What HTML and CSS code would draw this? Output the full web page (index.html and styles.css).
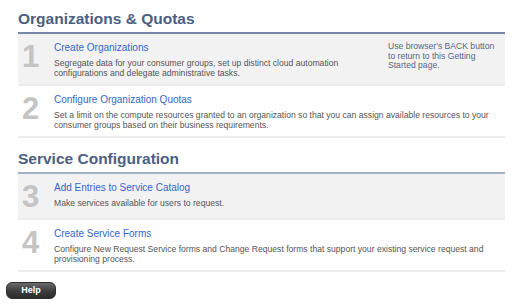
FILE: index.html
```html
<!DOCTYPE html>
<html>
<head>
<meta charset="utf-8">
<link rel="stylesheet" href="styles.css">
</head>
<body>
<div class="page">
  <section class="section">
    <h2 class="heading">Organizations &amp; Quotas</h2>
    <div class="list">
      <div class="step shaded">
        <div class="num">1</div>
        <div class="body">
          <a class="title">Create Organizations</a>
          <p class="desc">Segregate data for your consumer groups, set up distinct cloud automation configurations and delegate administrative tasks.</p>
        </div>
        <div class="note">Use browser's BACK button to return to this Getting Started page.</div>
      </div>
      <div class="step">
        <div class="num">2</div>
        <div class="body wide">
          <a class="title">Configure Organization Quotas</a>
          <p class="desc">Set a limit on the compute resources granted to an organization so that you can assign available resources to your consumer groups based on their business requirements.</p>
        </div>
      </div>
    </div>
  </section>
  <section class="section second">
    <h2 class="heading">Service Configuration</h2>
    <div class="list light">
      <div class="step shaded">
        <div class="num">3</div>
        <div class="body wide">
          <a class="title">Add Entries to Service Catalog</a>
          <p class="desc">Make services available for users to request.</p>
        </div>
      </div>
      <div class="step">
        <div class="num">4</div>
        <div class="body wide">
          <a class="title">Create Service Forms</a>
          <p class="desc">Configure New Request Service forms and Change Request forms that support your existing service request and provisioning process.</p>
        </div>
      </div>
    </div>
  </section>
</div>
<div class="footer">
  <button class="help">Help</button>
</div>
</body>
</html>
```
FILE: styles.css
```css
html, body {
  margin: 0;
  padding: 0;
  background: #ffffff;
  font-family: "Liberation Sans", Arial, Helvetica, sans-serif;
}

.page {
  padding: 9px 15px 0 18px;
}

.heading {
  margin: 0;
  font-size: 15.5px;
  font-weight: bold;
  color: #4b6081;
  line-height: 20px;
  padding-bottom: 3px;
  border-bottom: 2px solid #7588a8;
}

.second {
  margin-top: 11px;
}

.second .heading {
  border-bottom-color: #a3b1c7;
}

.step {
  display: flex;
  border-bottom: 2px solid #ececec;
  padding: 8px 0 6px 0;
}

.step.shaded {
  background: #f2f2f2;
}

.num {
  width: 36px;
  flex: none;
  padding-left: 4px;
  box-sizing: border-box;
  font-size: 31px;
  font-weight: bold;
  color: #c4c4c4;
  line-height: 30px;
}

.body {
  width: 305px;
  flex: none;
}

.body.wide {
  width: 440px;
}

.title {
  display: block;
  font-size: 10px;
  line-height: 12px;
  color: #3566c9;
  cursor: pointer;
}

.desc {
  margin: 4px 0 0 0;
  font-size: 8.6px;
  line-height: 10px;
  color: #555555;
}

.note {
  margin-left: 29px;
  margin-top: 0;
  width: 112px;
  font-size: 8.6px;
  line-height: 9.5px;
  color: #54678b;
}

.footer {
  padding: 10px 0 0 6px;
}

.help {
  display: block;
  width: 50px;
  height: 17px;
  border: 1px solid #2e2e2e;
  border-radius: 6px;
  background: linear-gradient(#6a6a6a, #3c3c3c 55%, #2c2c2c);
  color: #ffffff;
  font-family: "Liberation Sans", Arial, sans-serif;
  font-size: 9px;
  font-weight: bold;
  padding: 0;
  line-height: 15px;
}
```
